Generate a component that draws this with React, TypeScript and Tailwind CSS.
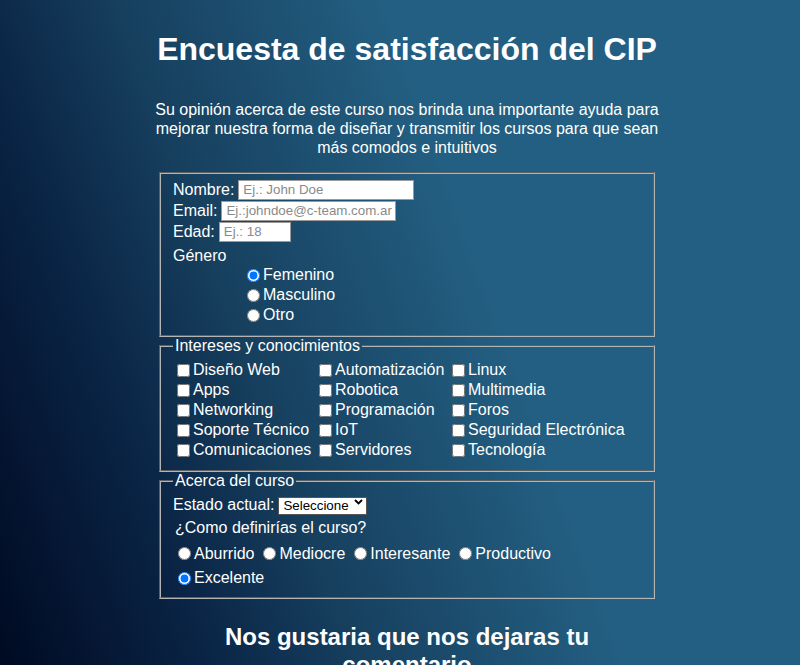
const intereses = [
  ['Diseño Web', 'Automatización', 'Linux'],
  ['Apps', 'Robotica', 'Multimedia'],
  ['Networking', 'Programación', 'Foros'],
  ['Soporte Técnico', 'IoT', 'Seguridad Electrónica'],
  ['Comunicaciones', 'Servidores', 'Tecnología'],
];

const opiniones = ['Aburrido', 'Mediocre', 'Interesante', 'Productivo'];

function TextField({ label, placeholder, width }: { label: string; placeholder: string; width: string }) {
  return (
    <div className="flex h-[21px] items-center gap-[4px]">
      <span>{label}</span>
      <input
        type="text"
        placeholder={placeholder}
        className={`${width} h-5 border border-[#9a9a9a] bg-white pl-[4px] text-[13.33px] text-black placeholder:text-[#8a8a8a]`}
      />
    </div>
  );
}

export default function App() {
  return (
    <div className="h-screen overflow-hidden bg-[linear-gradient(70deg,#000a22_0%,#0a2445_20%,#17405f_35%,#235f82_60%)] font-['Liberation_Sans',Arial,sans-serif] text-white">
      <div className="flex flex-col items-center pl-[14px]">
        <h1 className="pt-[31px] text-[32px] leading-[37px] font-bold">Encuesta de satisfacción del CIP</h1>

        <p className="mt-[32px] w-[510px] text-center text-[16px] leading-[19px]">
          Su opinión acerca de este curso nos brinda una importante ayuda para mejorar nuestra forma de
          diseñar y transmitir los cursos para que sean más comodos e intuitivos
        </p>

        {/* Datos personales */}
        <fieldset className="mt-[15px] w-[496px] border-2 border-[#b4b4b4] [border-style:groove] pt-[5px] pr-[10px] pb-[10px] pl-[12px] text-[16px]">
          <TextField label="Nombre:" placeholder="Ej.: John Doe" width="w-[176px]" />
          <TextField label="Email:" placeholder="Ej.:johndoe@c-team.com.ar" width="w-[175px]" />
          <TextField label="Edad:" placeholder="Ej.: 18" width="w-[72px]" />
          <div className="mt-[4px] h-[19px] leading-[19px]">Género</div>
          <div className="flex flex-col pl-[69px]">
            {['Femenino', 'Masculino', 'Otro'].map((g) => (
              <label key={g} className="flex h-5 items-center">
                <input type="radio" name="genero" defaultChecked={g === 'Femenino'} className="ml-[5px] mr-[3px] h-[13px] w-[13px]" />
                <span>{g}</span>
              </label>
            ))}
          </div>
        </fieldset>

        {/* Intereses */}
        <fieldset className="w-[496px] border-2 border-[#b4b4b4] [border-style:groove] pt-[5px] pr-[10px] pb-[10px] pl-[12px] text-[16px]">
          <legend className="px-[2px] leading-[18px]">Intereses y conocimientos</legend>
          <div className="grid grid-cols-[142px_133px_auto]">
            {intereses.flat().map((item) => (
              <label key={item} className="flex h-5 items-center whitespace-nowrap">
                <input type="checkbox" className="ml-[4px] mr-[3px] h-[13px] w-[13px]" />
                <span>{item}</span>
              </label>
            ))}
          </div>
        </fieldset>

        {/* Acerca del curso */}
        <fieldset className="w-[496px] border-2 border-[#b4b4b4] [border-style:groove] pt-[5px] pr-[10px] pb-[7px] pl-[12px] text-[16px]">
          <legend className="px-[2px] leading-[18px]">Acerca del curso</legend>
          <div className="flex h-5 items-center gap-[4px]">
            <span>Estado actual:</span>
            <div className="relative">
              <select className="h-[18px] w-[89px] appearance-none border border-[#555] bg-white pl-[4px] pr-[14px] text-[13.33px] leading-[16px] text-black">
                <option>Seleccione</option>
                <option>Estudiante</option>
                <option>Egresado</option>
              </select>
              <svg className="pointer-events-none absolute top-[6px] right-[4px] h-[6px] w-[9px]" viewBox="0 0 9 6">
                <path d="M1 1l3.5 3.5L8 1" fill="none" stroke="#000" strokeWidth="1.8" />
              </svg>
            </div>
          </div>
          <div className="flex h-[26px] items-center pl-[2px]">¿Como definirías el curso?</div>
          <div className="flex h-[25px] items-center gap-[9px] pl-[5px]">
            {opiniones.map((o) => (
              <label key={o} className="flex items-center">
                <input type="radio" name="opinion" className="mr-[3px] h-[13px] w-[13px]" />
                <span>{o}</span>
              </label>
            ))}
          </div>
          <div className="flex h-6 items-center pl-[5px]">
            <label className="flex items-center">
              <input type="radio" name="opinion" defaultChecked className="mr-[3px] h-[13px] w-[13px]" />
              <span>Excelente</span>
            </label>
          </div>
        </fieldset>

        <h2 className="mt-[24px] w-[480px] text-center text-[24px] leading-[28px] font-bold">
          Nos gustaria que nos dejaras tu comentario
        </h2>
      </div>
    </div>
  );
}
